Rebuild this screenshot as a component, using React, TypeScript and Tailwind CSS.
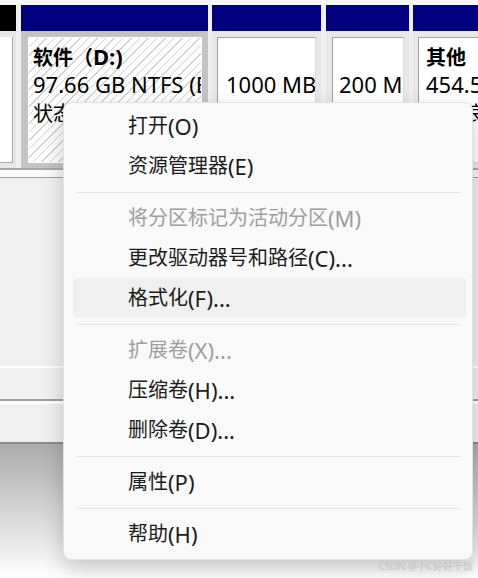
import React from "react";

type Item = { cjk: string; latin: string; disabled?: boolean; hover?: boolean } | { sep: true };

const items: Item[] = [
  { cjk: "打开", latin: "(O)" },
  { cjk: "资源管理器", latin: "(E)" },
  { sep: true },
  { cjk: "将分区标记为活动分区", latin: "(M)", disabled: true },
  { cjk: "更改驱动器号和路径", latin: "(C)..." },
  { cjk: "格式化", latin: "(F)...", hover: true },
  { sep: true },
  { cjk: "扩展卷", latin: "(X)...", disabled: true },
  { cjk: "压缩卷", latin: "(H)..." },
  { cjk: "删除卷", latin: "(D)..." },
  { sep: true },
  { cjk: "属性", latin: "(P)" },
  { sep: true },
  { cjk: "帮助", latin: "(H)" },
];

const font = { fontFamily: '"Noto Sans", "Noto Sans CJK SC", sans-serif' };

function Line({ children, bold }: { children?: React.ReactNode; bold?: boolean }) {
  return (
    <div className={`h-[28px] leading-[28px] whitespace-nowrap text-[22px] text-black ${bold ? "font-bold" : ""}`}>
      {children}
    </div>
  );
}

function C({ children }: { children: React.ReactNode }) {
  return <span className="text-[20px]">{children}</span>;
}

export default function App() {
  return (
    <div className="relative w-[478px] h-[578px] overflow-hidden bg-[#f0f0f0]" style={font}>
      <div className="flex flex-col">
        <div className="h-[5px] bg-[#f6f6f6]" />
        <div className="flex h-[163px] bg-[#f0f0f0]">
          {/* col 1 */}
          <div className="w-[16px] shrink-0 flex flex-col">
            <div className="h-[26px] bg-black" />
            <div className="flex-1 bg-[#e6e6e6] pt-[6px] pr-[3px] pb-[5px]">
              <div className="h-full bg-white border-r border-b border-[#a8a8a8]" />
            </div>
          </div>
          {/* col 2 */}
          <div className="ml-[5px] w-[187px] shrink-0 flex flex-col">
            <div className="h-[26px] bg-[#000080]" />
            <div className="flex-1 bg-[#c4c4c4] pt-[6px] pl-[7px] pr-[6px] pb-[5px]">
              <div className="h-full overflow-hidden border border-white bg-[repeating-linear-gradient(135deg,#d2d2d2_0px,#d2d2d2_1px,#ffffff_1px,#ffffff_6px)] pl-[4px] pt-[4px]">
                <Line bold>
                  <C>软件（</C>D:)
                </Line>
                <Line>97.66 GB NTFS (BitLocker <C>已加密</C>)</Line>
                <Line>
                  <C>状态良好</C> (<C>基本数据分区</C>)
                </Line>
              </div>
            </div>
          </div>
          {/* col 3 */}
          <div className="ml-[4px] w-[109px] shrink-0 flex flex-col">
            <div className="h-[26px] bg-[#000080]" />
            <div className="flex-1 bg-[#e8e8e8] pt-[6px] pl-[5px] pr-[5px] pb-[5px]">
              <div className="h-full overflow-hidden bg-white border border-t-[#a0a0a0] border-l-[#a0a0a0] border-r-[#dcdcdc] border-b-[#dcdcdc] pl-[8px] pt-[4px]">
                <Line> </Line>
                <Line>1000 MB</Line>
                <Line>
                  <C>状态良好</C> (<C>恢复分区</C>)
                </Line>
              </div>
            </div>
          </div>
          {/* col 4 */}
          <div className="ml-[5px] w-[83px] shrink-0 flex flex-col">
            <div className="h-[26px] bg-[#000080]" />
            <div className="flex-1 bg-[#e8e8e8] pt-[6px] pl-[6px] pr-[5px] pb-[5px]">
              <div className="h-full overflow-hidden bg-white border border-t-[#a0a0a0] border-l-[#a0a0a0] border-r-[#dcdcdc] border-b-[#dcdcdc] pl-[6px] pt-[4px]">
                <Line> </Line>
                <Line>200 MB</Line>
                <Line>
                  <C>状态良好</C> (EFI <C>系统分区</C>)
                </Line>
              </div>
            </div>
          </div>
          {/* col 5 */}
          <div className="ml-[4px] flex-1 min-w-0 flex flex-col">
            <div className="h-[26px] bg-[#000080]" />
            <div className="flex-1 min-w-0 bg-[#e8e8e8] pt-[6px] pl-[5px] pb-[5px]">
              <div className="h-full overflow-hidden bg-white border border-t-[#a0a0a0] border-l-[#a0a0a0] border-r-0 border-b-[#dcdcdc] pl-[7px] pt-[4px]">
                <Line bold>
                  <C>其他</C>
                </Line>
                <Line>454.57 GB NTFS</Line>
                <Line>
                  <C>状态良好</C> (<C>基本数据分区</C>)
                </Line>
              </div>
            </div>
          </div>
        </div>
        <div className="h-[2px] bg-[#a8a8a8]" />
        <div className="h-[7px] bg-[#fafafa]" />
        <div className="h-[1px] bg-[#a0a0a0]" />
        <div className="h-[188px] bg-[#f0f0f0]" />
        <div className="h-[2px] bg-white" />
        <div className="h-[31px] bg-[#f0f0f0]" />
        <div className="h-[2px] bg-[#a0a0a0]" />
        <div className="h-[3px] bg-white" />
        <div className="h-[38px] bg-[#f0f0f0]" />
        <div className="h-[2px] bg-[#8c8c8c]" />
        <div className="h-[134px] bg-gradient-to-b from-[#acacac] to-white" />
      </div>

      {/* context menu */}
      <div className="absolute left-[63px] top-[102px] w-[410px] rounded-[8px] border border-[#e2e2e2] bg-[#f9f9f9] pt-[3px] pb-[5px] shadow-[0_8px_22px_rgba(0,0,0,0.2)]">
        {items.map((it, i) =>
          "sep" in it ? (
            <div key={i} className="h-[12px] flex items-center ml-[13px] mr-[12px]">
              <div className="h-[1px] w-full bg-[#e1e1e1]" />
            </div>
          ) : (
            <div
              key={i}
              className={`h-[40px] ml-[9px] mr-[6px] pl-[55px] flex items-center rounded-[4px] whitespace-nowrap ${
                it.hover ? "bg-[#f0f0f0]" : ""
              } ${it.disabled ? "text-[#9e9e9e]" : "text-[#1b1b1b]"}`}
            >
              <span className="text-[20px]">{it.cjk}</span>
              <span className="text-[22px]">{it.latin}</span>
            </div>
          )
        )}
      </div>

      <div className="absolute right-[5px] bottom-[5px] text-[10px] leading-[13px] text-[#c4c4c4] whitespace-nowrap">
        CSDN @小C好好干饭
      </div>
    </div>
  );
}
